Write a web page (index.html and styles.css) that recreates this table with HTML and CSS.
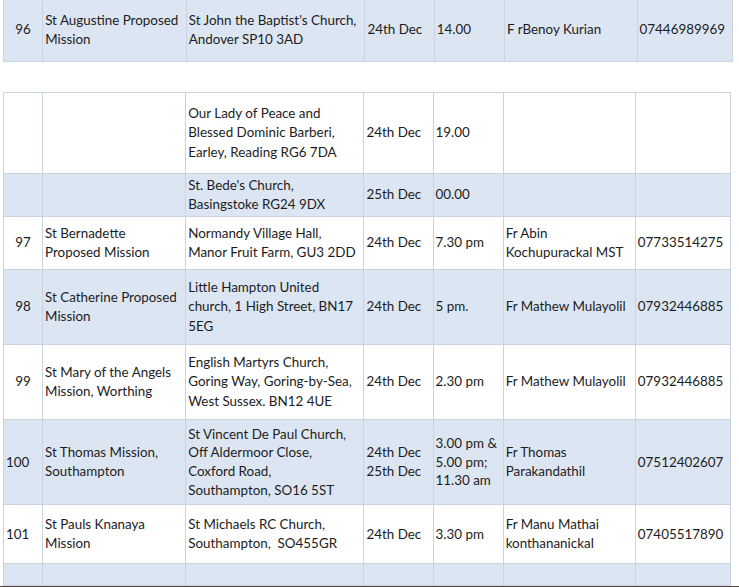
FILE: index.html
```html
<!DOCTYPE html>
<html>
<head>
<meta charset="utf-8">
<link rel="stylesheet" href="styles.css">
</head>
<body>
<div class="page">
  <table class="grid top">
    <colgroup>
      <col class="c1"><col class="c2"><col class="c3"><col class="c4"><col class="c5"><col class="c6"><col class="c7">
    </colgroup>
    <tr class="blue r96">
      <td class="num">96</td>
      <td>St Augustine Proposed<br>Mission</td>
      <td>St John the Baptist's Church,<br>Andover SP10 3AD</td>
      <td>24th Dec</td>
      <td>14.00</td>
      <td>F rBenoy Kurian</td>
      <td>07446989969</td>
    </tr>
  </table>

  <table class="grid main">
    <colgroup>
      <col class="c1"><col class="c2"><col class="c3"><col class="c4"><col class="c5"><col class="c6"><col class="c7">
    </colgroup>
    <tr class="ra">
      <td></td>
      <td></td>
      <td>Our Lady of Peace and<br>Blessed Dominic Barberi,<br>Earley, Reading RG6 7DA</td>
      <td>24th Dec</td>
      <td>19.00</td>
      <td></td>
      <td></td>
    </tr>
    <tr class="blue rb">
      <td></td>
      <td></td>
      <td>St. Bede's Church,<br>Basingstoke RG24 9DX</td>
      <td>25th Dec</td>
      <td>00.00</td>
      <td></td>
      <td></td>
    </tr>
    <tr class="r97">
      <td class="num">97</td>
      <td>St Bernadette<br>Proposed Mission</td>
      <td>Normandy Village Hall,<br>Manor Fruit Farm, GU3 2DD</td>
      <td>24th Dec</td>
      <td>7.30 pm</td>
      <td>Fr Abin<br>Kochupurackal MST</td>
      <td>07733514275</td>
    </tr>
    <tr class="blue r98">
      <td class="num">98</td>
      <td>St Catherine Proposed<br>Mission</td>
      <td>Little Hampton United<br>church, 1 High Street, BN17<br>5EG</td>
      <td>24th Dec</td>
      <td>5 pm.</td>
      <td>Fr Mathew Mulayolil</td>
      <td>07932446885</td>
    </tr>
    <tr class="r99">
      <td class="num">99</td>
      <td>St Mary of the Angels<br>Mission, Worthing</td>
      <td>English Martyrs Church,<br>Goring Way, Goring-by-Sea,<br>West Sussex. BN12 4UE</td>
      <td>24th Dec</td>
      <td>2.30 pm</td>
      <td>Fr Mathew Mulayolil</td>
      <td>07932446885</td>
    </tr>
    <tr class="blue r100">
      <td class="num wide">100</td>
      <td>St Thomas Mission,<br>Southampton</td>
      <td>St Vincent De Paul Church,<br>Off Aldermoor Close,<br>Coxford Road,<br>Southampton, SO16 5ST</td>
      <td>24th Dec<br>25th Dec</td>
      <td>3.00 pm &amp;<br>5.00 pm;<br>11.30 am</td>
      <td>Fr Thomas<br>Parakandathil</td>
      <td>07512402607</td>
    </tr>
    <tr class="r101">
      <td class="num wide">101</td>
      <td>St Pauls Knanaya<br>Mission</td>
      <td>St Michaels RC Church,<br>Southampton,&nbsp; SO455GR</td>
      <td>24th Dec</td>
      <td>3.30 pm</td>
      <td>Fr Manu Mathai<br>konthananickal</td>
      <td>07405517890</td>
    </tr>
    <tr class="blue rlast">
      <td></td><td></td><td></td><td></td><td></td><td></td><td></td>
    </tr>
  </table>
  <div class="floor"></div>
</div>
</body>
</html>
```

FILE: styles.css
```css
html, body {
  margin: 0;
  padding: 0;
  background: #ffffff;
}

.page {
  width: 739px;
  height: 587px;
  overflow: hidden;
  display: flex;
  flex-direction: column;
  font-family: Lato, "Open Sans", sans-serif;
  font-size: 13.4px;
  color: #1c1c22;
}

.grid {
  border-collapse: collapse;
  table-layout: fixed;
  margin-left: 3px;
  width: 728px;
}

.grid td {
  border: 1.5px solid #c9d3e1;
  padding: 0 0 0 2px;
  vertical-align: middle;
  line-height: 19.5px;
  white-space: nowrap;
  overflow: hidden;
}

.c1 { width: 39px; }
.c2 { width: 143px; }
.c3 { width: 178px; }
.c4 { width: 69px; }
.c5 { width: 70px; }
.c6 { width: 132px; }
.c7 { width: 95px; }

.top {
  margin-top: -2px;
  width: 730px;
}

.main {
  margin-top: 30px;
}

.blue td {
  background: #dce6f2;
}

.grid td.num {
  text-align: center;
  padding: 0;
}

.grid td.num.wide {
  text-align: left;
  padding-left: 2px;
}

.r96 td { height: 62px; }
.ra td { height: 80px; }
.rb td { height: 42px; }
.r97 td { height: 52px; }
.r98 td { height: 74px; }
.r99 td { height: 74px; }
.r100 td { height: 84px; line-height: 18.7px; }
.r101 td { height: 58px; line-height: 19px; }
.rlast td { height: 21px; }

.floor {
  flex: 1;
  background: #54483c;
}
```
